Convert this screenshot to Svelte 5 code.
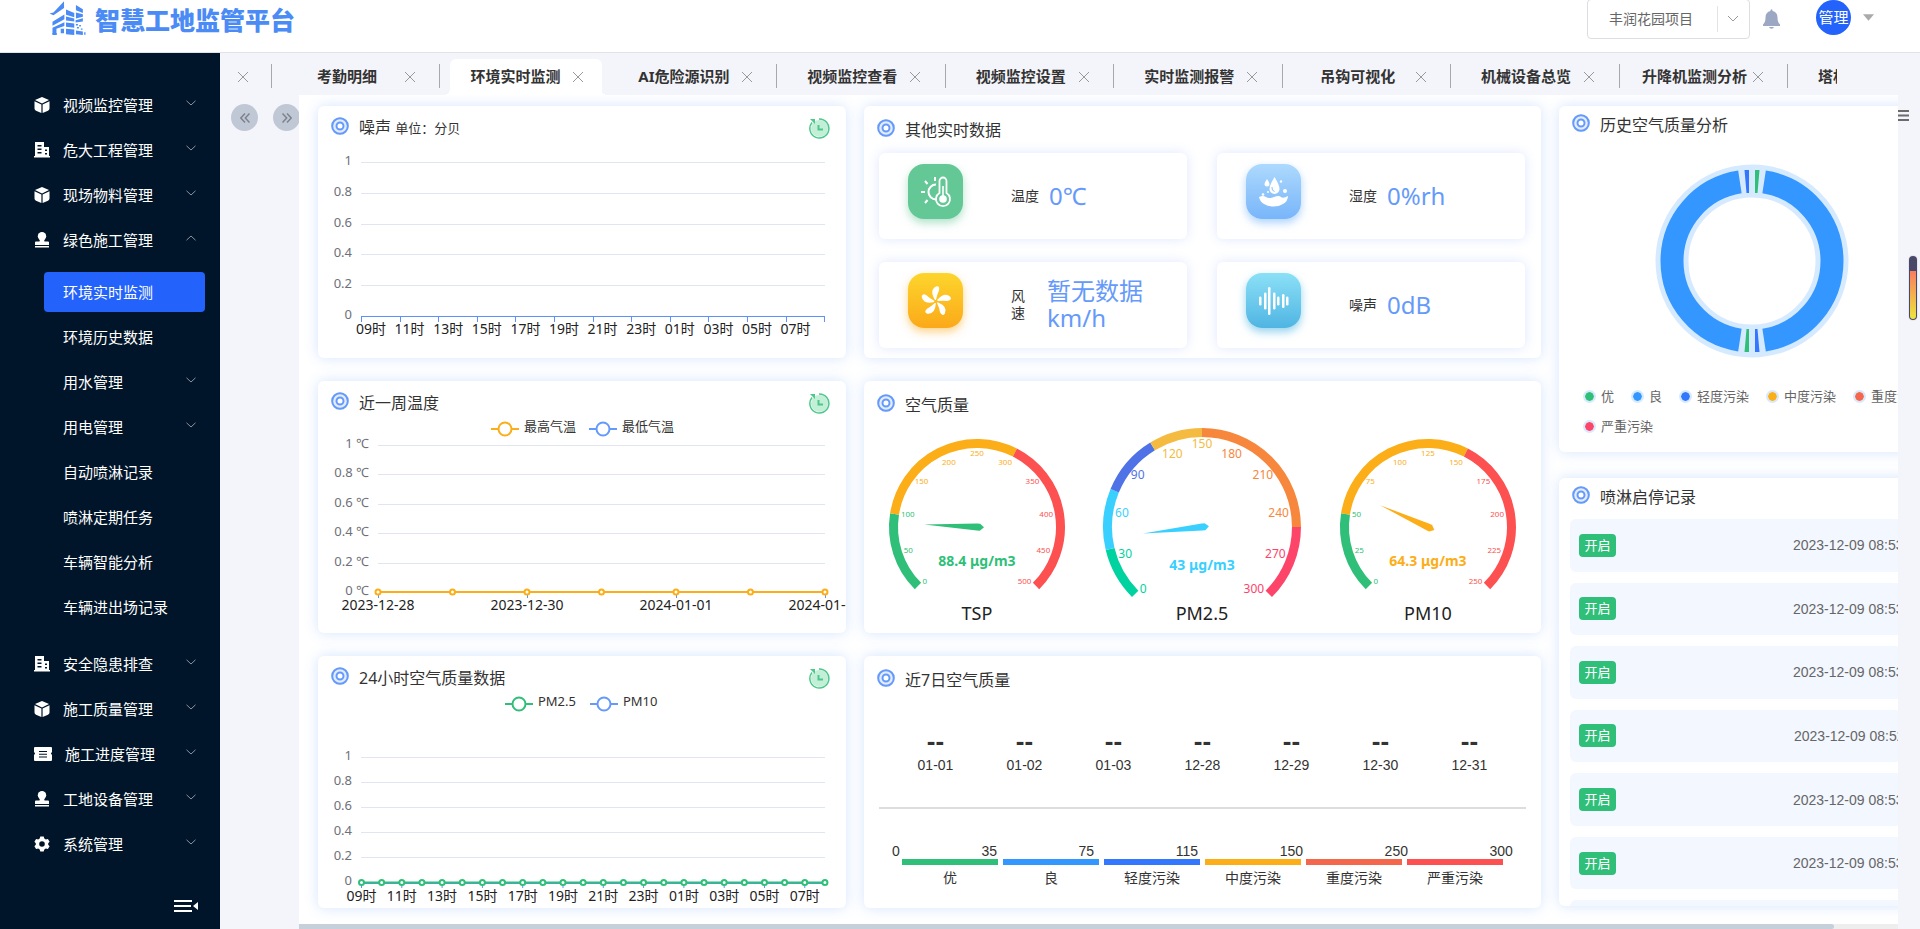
<script lang="ts">
  type MenuItem = { icon: string; label: string; open?: boolean };

  const menuTop: MenuItem[] = [
    { icon: 'box', label: '视频监控管理' },
    { icon: 'building', label: '危大工程管理' },
    { icon: 'box', label: '现场物料管理' },
    { icon: 'stamp', label: '绿色施工管理', open: true },
  ];
  const subMenu = [
    { label: '环境实时监测', active: true },
    { label: '环境历史数据' },
    { label: '用水管理', more: true },
    { label: '用电管理', more: true },
    { label: '自动喷淋记录' },
    { label: '喷淋定期任务' },
    { label: '车辆智能分析' },
    { label: '车辆进出场记录' },
  ];
  const menuBottom: MenuItem[] = [
    { icon: 'building', label: '安全隐患排查' },
    { icon: 'box', label: '施工质量管理' },
    { icon: 'ticket', label: '施工进度管理' },
    { icon: 'stamp', label: '工地设备管理' },
    { icon: 'gear', label: '系统管理' },
  ];

  const tabs = [
    '考勤明细',
    '环境实时监测',
    'AI危险源识别',
    '视频监控查看',
    '视频监控设置',
    '实时监测报警',
    '吊钩可视化',
    '机械设备总览',
    '升降机监测分析',
    '塔机监测分析',
  ];
  let activeTab = $state(1);

  const hours = ['09', '11', '13', '15', '17', '19', '21', '23', '01', '03', '05', '07'];
  const yTicks = ['1', '0.8', '0.6', '0.4', '0.2', '0'];

  const metrics = [
    { kind: 'temp', label: '温度', value: '0℃' },
    { kind: 'humid', label: '湿度', value: '0%rh' },
    { kind: 'wind', label: '风速', value: '暂无数据km/h' },
    { kind: 'noise', label: '噪声', value: '0dB' },
  ];

  const bars = [
    [14, 9],
    [19, 17],
    [23, 28],
    [28, 17],
    [32, 9],
    [37, 14],
    [41, 9],
  ];

  type Gauge = {
    name: string;
    cx: number;
    r: number;
    max: number;
    value: number;
    font: number;
    detail: number;
    color: string;
    stops: [number, string][];
  };
  const gauges: Gauge[] = [
    {
      name: 'TSP',
      cx: 113,
      r: 88,
      max: 500,
      value: 88.4,
      font: 8,
      detail: 34,
      color: '#2fbf78',
      stops: [[100, '#2fbf78'], [300, '#fcae18'], [500, '#fd5151']],
    },
    {
      name: 'PM2.5',
      cx: 338,
      r: 99,
      max: 300,
      value: 43,
      font: 12,
      detail: 38,
      color: '#39d0ff',
      stops: [
        [35, '#00d2a0'],
        [75, '#39d0ff'],
        [115, '#4f73e6'],
        [150, '#f4bb40'],
        [250, '#f6873c'],
        [300, '#fd4469'],
      ],
    },
    {
      name: 'PM10',
      cx: 564,
      r: 88,
      max: 250,
      value: 64.3,
      font: 8,
      detail: 34,
      color: '#fcae18',
      stops: [[50, '#2fbf78'], [150, '#fcae18'], [250, '#fd5151']],
    },
  ];
  const gaugeY = 146;

  // Dials sweep 270 degrees clockwise, from lower left to lower right.
  function angleOf(g: Gauge, v: number) {
    return ((225 - (v / g.max) * 270) * Math.PI) / 180;
  }
  function arc(cx: number, cy: number, r: number, a: number, b: number) {
    const large = Math.abs(a - b) > Math.PI ? 1 : 0;
    const x1 = cx + r * Math.cos(a);
    const y1 = cy - r * Math.sin(a);
    const x2 = cx + r * Math.cos(b);
    const y2 = cy - r * Math.sin(b);
    return `M${x1} ${y1}A${r} ${r} 0 ${large} 1 ${x2} ${y2}`;
  }
  function segments(g: Gauge) {
    return g.stops.map(([to, color], i) => {
      const from = i ? g.stops[i - 1][0] : 0;
      return { color, d: arc(g.cx, gaugeY, g.r - 4.5, angleOf(g, from), angleOf(g, to)) };
    });
  }
  function labels(g: Gauge) {
    return Array.from({ length: 11 }, (_, i) => {
      const v = (g.max / 10) * i;
      const a = angleOf(g, v);
      const ux = Math.cos(a);
      const uy = -Math.sin(a);
      const r = g.r - 11;
      return {
        text: v,
        x: g.cx + ux * r,
        y: gaugeY - 1 + uy * r + (uy < -0.8 ? g.font / 2 : uy > 0.8 ? -g.font / 2 : 0),
        anchor: ux < -0.4 ? 'start' : ux > 0.4 ? 'end' : 'middle',
        color: g.stops.find(([to]) => v <= to)?.[1],
      };
    });
  }

  const days = ['01-01', '01-02', '01-03', '12-28', '12-29', '12-30', '12-31'];
  const levels = [
    { label: '优', color: '#2fbf78', line: '#2fbf78' },
    { label: '良', color: '#3497ff', line: '#3497ff' },
    { label: '轻度污染', color: '#3477ff', line: '#3477ff' },
    { label: '中度污染', color: '#fcae18', line: '#fcae18' },
    { label: '重度污染', color: '#f5674c', line: '#f5674c' },
    { label: '严重污染', color: '#fd4469', line: '#fd5151' },
  ];
  const bounds = [0, 35, 75, 115, 150, 250, 300];

  const rad = (deg: number) => (deg * Math.PI) / 180;

  const sprays = [
    '2023-12-09 08:53:58',
    '2023-12-09 08:53:46',
    '2023-12-09 08:53:32',
    '2023-12-09 08:52:11',
    '2023-12-09 08:53:08',
    '2023-12-09 08:53:02',
    '2023-12-09 08:53:00',
  ];
</script>

{#snippet menuIcon(name: string)}
  <svg
    class="menu-icon"
    class:wide={name === 'ticket'}
    viewBox={name === 'ticket' ? '0 0 18 16' : '0 0 16 16'}
    fill="#fff"
    aria-hidden="true"
  >
    {#if name === 'box'}
      <path d="M8 0 15 3 8 6.400 1 3z" />
      <path d="M.500 4.200 7.400 7.400V16L2 13.700Q.500 13 .500 11.500zM15.500 4.200 8.600 7.400V16l5.400-2.300q1.500-.700 1.500-2.200z" />
    {:else if name === 'building'}
      <path fill-rule="evenodd" d="M1 0h9v5h5v9h1v1.500H0V14h1zM3.500 3v1.500h4V3zm0 3.500V8h4V6.500zm0 3.500v1.500h4V10zM11 7.500V9h2V7.500zm0 3.500v1.500h2V11z" />
    {:else if name === 'stamp'}
      <circle cx="8" cy="4.200" r="4.200" />
      <path d="M6 7h4l.500 2.500H14q1 0 1 1V13H1v-2.500q0-1 1-1h3.500zM1 14h14v1.500H1z" />
    {:else if name === 'ticket'}
      <path fill-rule="evenodd" d="M1 1h16q1 0 1 1v4.200q-1 .300-1 1.300t1 1.300V14q0 1-1 1H1q-1 0-1-1V8.800q1-.300 1-1.300T0 6.200V2q0-1 1-1zM5 5v1h8V5zm0 2.800v1h8v-1zm0 2.800v1h8v-1z" />
    {:else}
      <path fill-rule="evenodd" d="M6.300.500h3.400l.600 2 1.500.900 2.100-.500 1.700 2.900L14.200 7.200v1.600l1.400 1.400-1.700 2.900-2.100-.500-1.500.900-.600 2H6.300l-.600-2-1.500-.900-2.100.500-1.700-2.900 1.400-1.400V7.200L.400 5.800l1.700-2.900 2.100.500 1.500-.900zM8 5.200a2.800 2.800 0 1 0 0 5.600 2.800 2.800 0 0 0 0-5.600z" />
    {/if}
  </svg>
{/snippet}

{#snippet chevron(up: boolean)}
  <svg class="chevron" viewBox="0 0 10 6" fill="none" stroke="#8b939d" aria-hidden="true">
    <path d={up ? 'M.500 5.200 5 1l4.500 4.200' : 'M.500.800 5 5 9.500.800'} />
  </svg>
{/snippet}

{#snippet menuRow(item: MenuItem)}
  <li>
    <button class="menu-row" aria-expanded={!!item.open}>
      {@render menuIcon(item.icon)}
      <span>{item.label}</span>
      {@render chevron(!!item.open)}
    </button>
  </li>
{/snippet}

{#snippet target()}
  <svg class="target" viewBox="0 0 18 18" fill="none" stroke="#659afb" aria-hidden="true">
    <circle cx="9" cy="9" r="9" fill="#e4edff" stroke="none" />
    <circle cx="9" cy="9" r="7.800" stroke-width="2" />
    <circle cx="9" cy="9" r="3.500" stroke-width="2" fill="#fff" />
  </svg>
{/snippet}

{#snippet refresh(label: string)}
  <button class="refresh" aria-label={label}>
    <svg viewBox="0 0 22 22" fill="none" stroke="#4cc88a" aria-hidden="true">
      <circle cx="11.500" cy="11.500" r="8.500" fill="#c3eed8" stroke="none" />
      <path d="M11 2A9.500 9.500 0 1 1 4 5.500" stroke-width="1.500" />
      <path d="M2 2 7 2 7 7z" fill="#4cc88a" stroke="none" />
      <path d="M10.500 8V12.500h4.500" stroke-width="2" />
    </svg>
  </button>
{/snippet}

{#snippet legendMark(x: number, color: string, label: string)}
  <path d="M{x} 48h28" stroke={color} stroke-width="2" />
  <circle cx={x + 14} cy="48" r="6.500" fill="#fff" stroke={color} stroke-width="2" />
  <text class="key" x={x + 33} y="45">{label}</text>
{/snippet}

<div class="app">
  <header>
    <div class="brand">
      <svg viewBox="147 3 114 106" fill="#4a8bf5" aria-hidden="true">
        <path d="M148 41 160 38 192 4v20l-32 22z" />
        <path d="M157 66 193 44v14l-36 20zM157 84l36-17v12l-24 8v17h-12z" />
        <path d="M198 29 223 39v13l-25-7zM228 15l21 13v11l-21-8zM228 38l21 5v8l-21 5zM198 50l25 6v9l-25-3zM227 61l22-6v10l-22 3z" />
        <path d="M198 68l25 3v13l-25-3zM198 87l25 2v17l-25-2zM228 92l21 3v11l-21-2zM157 100h13v6h-13z" />
        <path d="M228 73h6v4h-6zM238 76h5v4h-5zM231 82h6v4h-6zM243 86h5v4h-5zM253 98h4v7h-4zM182 87h10v14h-10z" />
      </svg>
      <h1>智慧工地监管平台</h1>
    </div>
    <div class="tools">
      <div class="project">
        <select aria-label="项目">
          <option>丰润花园项目</option>
        </select>
        <svg viewBox="0 0 12 8" fill="none" stroke="#999" aria-hidden="true"><path d="m1 1 5 5 5-5" /></svg>
      </div>
      <button class="bell" aria-label="消息">
        <svg viewBox="0 0 17 20" fill="#9ba7c3" aria-hidden="true">
          <path d="M7.500 2V1q1-1.500 2 0v1q5 1 5 6.500 0 5 2.500 7v1.500H0v-1.500q2.500-2 2.500-7Q2.500 3 7.500 2zM6 18h5q-.500 1.800-2.500 1.800T6 18z" />
        </svg>
      </button>
      <button class="user">
        <span class="avatar">管理</span>
        <svg viewBox="0 0 12 7" fill="#aaa" aria-hidden="true"><path d="M0 0h12L6 7z" /></svg>
      </button>
    </div>
  </header>

  <div class="body">
    <nav class="sidebar">
      <ul>
        {#each menuTop as item}
          {@render menuRow(item)}
        {/each}
      </ul>
      <ul class="sub">
        {#each subMenu as item}
          <li>
            <a href="#env" class:active={item.active}>
              <span>{item.label}</span>
              {#if item.more}{@render chevron(false)}{/if}
            </a>
          </li>
        {/each}
      </ul>
      <ul>
        {#each menuBottom as item}
          {@render menuRow(item)}
        {/each}
      </ul>
      <button class="collapse" aria-label="收起菜单">
        <svg viewBox="0 0 24 12" fill="#fff" aria-hidden="true">
          <path d="M0 0h18v2H0zM0 5h17v2H0zM0 10h18v2H0zM24 2v8l-5-4z" />
        </svg>
      </button>
    </nav>

    <main>
      <div class="tabs">
        <div class="tab stub">
          <button class="close" aria-label="关闭">
            <svg viewBox="0 0 10 10" aria-hidden="true"><path d="m0 0 10 10M10 0 0 10" /></svg>
          </button>
        </div>
        {#each tabs as tab, i}
          <div class="tab" class:active={i === activeTab} class:bare={i === activeTab + 1}>
            <button class="tab-label" onclick={() => (activeTab = i)}>{tab}</button>
            <button class="close" aria-label="关闭{tab}">
              <svg viewBox="0 0 10 10" aria-hidden="true"><path d="m0 0 10 10M10 0 0 10" /></svg>
            </button>
          </div>
        {/each}
      </div>

      <div class="stage">
        <div class="gutter">
          <button aria-label="向左">
            <svg viewBox="0 0 10 10" aria-hidden="true"><path d="M5 .500.800 5 5 9.500M9.500.500 5.300 5l4.200 4.500" /></svg>
          </button>
          <button aria-label="向右">
            <svg viewBox="0 0 10 10" aria-hidden="true"><path d="M.500.500 4.700 5 .500 9.500M5 .500 9.200 5 5 9.500" /></svg>
          </button>
        </div>

        <div class="viewport">
          <div class="board">
            <div class="col">
              <section class="card">
                <div class="head">
                  {@render target()}
                  <h2>噪声 <small>单位：分贝</small></h2>
                  {@render refresh('刷新噪声')}
                </div>
                <svg class="chart" viewBox="0 40 528 212" role="img" aria-label="噪声">
                  {#each yTicks as t, i}
                    {#if i < 5}<path class="grid" d="M43 {Math.round(56 + i * 30.8) + 0.5}H507" />{/if}
                    <text class="axis-y" x="34" y={54 + i * 30.8}>{t}</text>
                  {/each}
                  <path class="axis" d="M43 210.500H507" />
                  {#each Array(13) as _, i}
                    <path class="axis" d="M{Math.round(43 + i * 38.6) + 0.5} 210v6" />
                  {/each}
                  {#each hours as h, i}
                    <text class="axis-x" x={53 + i * 38.6} y="223">{h}时</text>
                  {/each}
                </svg>
              </section>

              <section class="card">
                <div class="head">
                  {@render target()}
                  <h2>近一周温度</h2>
                  {@render refresh('刷新温度')}
                </div>
                <svg class="chart" viewBox="0 40 528 212" role="img" aria-label="近一周温度">
                  {@render legendMark(173, '#fcae18', '最高气温')}
                  {@render legendMark(271, '#659afb', '最低气温')}
                  {#each yTicks as t, i}
                    {#if i < 5}<path class="grid" d="M60 {Math.round(64 + i * 29.4) + 0.5}H507" />{/if}
                    <text class="axis-y" x="51" y={62 + i * 29.4}>{t} ℃</text>
                  {/each}
                  <path d="M60 211H507" stroke="#fcae18" stroke-width="2" />
                  {#each Array(7) as _, i}
                    {#if i % 2 === 0}<path class="axis" d="M{60.5 + i * 74.5} 211v6" />{/if}
                    <circle cx={60 + i * 74.5} cy="211" r="2.500" fill="#fff" stroke="#fcae18" stroke-width="2" />
                  {/each}
                  {#each ['2023-12-28', '2023-12-30', '2024-01-01', '2024-01-03'] as d, i}
                    <text class="axis-x" x={60 + i * 149} y="224">{d}</text>
                  {/each}
                </svg>
              </section>

              <section class="card">
                <div class="head">
                  {@render target()}
                  <h2>24小时空气质量数据</h2>
                  {@render refresh('刷新空气质量')}
                </div>
                <svg class="chart" viewBox="0 40 528 212" role="img" aria-label="24小时空气质量数据">
                  {@render legendMark(187, '#2fbf78', 'PM2.5')}
                  {@render legendMark(272, '#659afb', 'PM10')}
                  {#each yTicks as t, i}
                    {#if i < 5}<path class="grid" d="M43 {Math.round(101 + i * 25.1) + 0.5}H507" />{/if}
                    <text class="axis-y" x="34" y={99 + i * 25.1}>{t}</text>
                  {/each}
                  <path class="axis" d="M43 227.500H507" />
                  <path d="M43 226.500H507" stroke="#2fbf78" stroke-width="2" />
                  {#each Array(24) as _, i}
                    {#if i % 2 === 0}<path class="axis" d="M{43.5 + i * 20.15} 227v5" />{/if}
                    <circle cx={43.5 + i * 20.15} cy="226.500" r="2.500" fill="#fff" stroke="#2fbf78" stroke-width="2" />
                  {/each}
                  {#each hours as h, i}
                    <text class="axis-x" x={43.5 + i * 40.3} y="240">{h}时</text>
                  {/each}
                </svg>
              </section>
            </div>

            <div class="col middle">
              <section class="card">
                <div class="head">
                  {@render target()}
                  <h2>其他实时数据</h2>
                </div>
                <div class="metrics">
                  {#each metrics as m}
                    <div class="metric">
                      <svg class="tile {m.kind}" viewBox="0 0 55 55" fill="#fff" aria-hidden="true">
                        {#if m.kind === 'temp'}
                          <path d="M28 20.500a7.500 7.500 0 1 0 0 15" fill="none" stroke="#fff" stroke-width="2" />
                          <path d="M27 13v4M17 17l2.500 3M13 28h4M17 39l2.500-3" stroke="#fff" stroke-width="2" />
                          <path d="M31.500 29V17a3.500 3.500 0 0 1 7 0v12a7 7 0 1 1-7 0z" fill="#64c896" stroke="#fff" stroke-width="1.800" />
                          <circle cx="35" cy="35" r="3.800" />
                          <path d="M34.200 22h1.600v11h-1.600z" />
                        {:else if m.kind === 'humid'}
                          <path d="M28.500 13q5 8 5 12a5 5 0 0 1-10 0q0-4 5-12zM21 15q2.500 3.500 2.500 5a2.500 2.500 0 0 1-5 0q0-1.500 2.500-5z" />
                          <circle cx="35" cy="17.500" r="1.200" />
                          <circle cx="39" cy="27" r="2" />
                          <circle cx="17" cy="30.500" r="1.300" />
                          <circle cx="22" cy="28" r="1" />
                          <path d="M13 33q4-2 7 0t8 0 7 0 7-1q0 5-5 8-4 2.500-9.500 2.500T18 40q-4-2-5-7z" />
                          <path d="M26 23q-.500 4 2.500 4.500" fill="none" stroke="#8cc3fb" />
                        {:else if m.kind === 'wind'}
                          {#each [0, 72, 144, 216, 288] as turn}
                            <path d="M27 27Q21 17 28 13.500q4-1 3 4-2 4-3 9.500z" transform="rotate({turn} 28 28.500)" />
                          {/each}
                          <circle cx="28" cy="28.500" r="1.500" fill="#fbbd20" />
                        {:else}
                          {#each bars as [x, h]}
                            <rect x={x - 1} y={28 - h / 2} width="2.500" height={h} rx="1.200" />
                          {/each}
                        {/if}
                      </svg>
                      <span class="metric-label" class:narrow={m.kind === 'wind'}>{m.label}</span>
                      <strong>{m.value}</strong>
                    </div>
                  {/each}
                </div>
              </section>

              <section class="card">
                <div class="head">
                  {@render target()}
                  <h2>空气质量</h2>
                </div>
                <svg class="chart" viewBox="0 44 677 208" role="img" aria-label="空气质量">
                  {#each gauges as g}
                    {#each segments(g) as s}
                      <path d={s.d} fill="none" stroke={s.color} stroke-width="9" />
                    {/each}
                    {#each labels(g) as l}
                      <text x={l.x} y={l.y} fill={l.color} font-size={g.font} text-anchor={l.anchor}>{l.text}</text>
                    {/each}
                    <path
                      d="M{-g.r * 0.6} 0 0-3.500 3-3.500 7 0 3 3.500 0 3.500z"
                      fill={g.color}
                      transform="translate({g.cx} {gaugeY}) rotate({45 + (g.value / g.max) * 270 - 90})"
                    />
                    <text class="reading" x={g.cx} y={gaugeY + g.detail} fill={g.color}>{g.value} μg/m3</text>
                    <text class="gauge-name" x={g.cx} y={gaugeY + 86}>{g.name}</text>
                  {/each}
                </svg>
              </section>

              <section class="card">
                <div class="head">
                  {@render target()}
                  <h2>近7日空气质量</h2>
                </div>
                <dl class="days">
                  {#each days as d}
                    <div>
                      <dd>--</dd>
                      <dt>{d}</dt>
                    </div>
                  {/each}
                </dl>
                <hr />
                <div class="bounds">
                  {#each bounds as b}<span>{b}</span>{/each}
                </div>
                <div class="levels">
                  {#each levels as l}
                    <span class="level"><i style:background={l.line}></i>{l.label}</span>
                  {/each}
                </div>
              </section>
            </div>

            <div class="col right">
              <section class="card">
                <div class="head">
                  {@render target()}
                  <h2>历史空气质量分析</h2>
                </div>
                <svg class="chart" viewBox="0 34 386 246" role="img" aria-label="历史空气质量分析">
                  <circle cx="193" cy="155" r="80" fill="none" stroke="#d6eaff" stroke-width="33" />
                  <path d={arc(193, 155, 80, rad(81.3), rad(-81.3))} fill="none" stroke="#3497ff" stroke-width="23" />
                  <path d={arc(193, 155, 80, rad(261.3), rad(98.7))} fill="none" stroke="#3497ff" stroke-width="23" />
                  <g transform="translate(193 155)">
                    <path d="M3-68V-91h4.500L5.500-68zM-3 68V91h-4.500l2-23z" fill="#2fbf78" />
                    <path d="M-3-68V-91h-4.500l2 23zM3 68V91h4.500l-2-23z" fill="#3477ff" />
                  </g>
                </svg>
                <ul class="legend">
                  {#each levels as l}
                    <li><i style:background-color={l.color}></i>{l.label}</li>
                  {/each}
                </ul>
              </section>

              <section class="card spray">
                <div class="head">
                  {@render target()}
                  <h2>喷淋启停记录</h2>
                </div>
                <ul class="records">
                  {#each sprays as s}
                    <li><span class="tag">开启</span><time>{s}</time></li>
                  {/each}
                </ul>
              </section>
            </div>
          </div>
          <div class="scrollbar"><span></span></div>
        </div>

        <div class="edge">
          <button aria-label="菜单">
            <svg viewBox="0 0 11 11" fill="#6b6b6b" aria-hidden="true"><path d="M0 0h11v2H0zM0 4.500h11v2H0zM0 9h11v2H0z" /></svg>
          </button>
        </div>
      </div>
    </main>
  </div>

  <div class="meter"><span></span></div>
</div>

<style>
  :global(body) {
    background: #f4f5fa;
  }
  .app {
    min-height: 100vh;
    display: flex;
    flex-direction: column;
    overflow: hidden;
    color: #333;
    font-family: 'Noto Sans', 'Noto Sans CJK SC', sans-serif;
    font-size: 14px;
  }
  button {
    padding: 0;
    border: 0;
    background: none;
    color: inherit;
    font: inherit;
    cursor: pointer;
  }
  svg {
    display: block;
    flex: none;
  }
  ul,
  dl,
  dd,
  h1,
  h2 {
    margin: 0;
    padding: 0;
    list-style: none;
  }

  header {
    display: flex;
    justify-content: space-between;
    height: 52px;
    background: #fff;
    border-bottom: 1px solid #e2e3e6;
  }
  .brand {
    display: flex;
    gap: 8px;
    padding: 1px 0 0 49px;
  }
  .brand svg {
    width: 38px;
    height: 35px;
  }
  h1 {
    color: #4a8bf5;
    font-size: 25px;
    line-height: 38px;
    font-weight: 900;
  }
  .tools {
    display: flex;
    align-items: flex-start;
    padding-right: 46px;
  }
  .project {
    display: flex;
    align-items: center;
    box-sizing: border-box;
    width: 163px;
    height: 40px;
    margin-top: -1px;
    padding-right: 10px;
    border: 1px solid #dcdee3;
    border-radius: 4px;
  }
  select {
    flex: 1;
    height: 26px;
    margin-right: 9px;
    padding: 0 0 2px 21px;
    appearance: none;
    border: 0;
    border-right: 1px solid #e2e4e8;
    background: none;
    color: #666;
    font: inherit;
  }
  .project svg {
    width: 12px;
    height: 8px;
  }
  .bell {
    margin: 9px 36px 0 13px;
  }
  .bell svg {
    width: 17px;
    height: 20px;
  }
  .user {
    display: flex;
    align-items: center;
    gap: 12px;
  }
  .avatar {
    width: 35px;
    height: 35px;
    border-radius: 50%;
    background: #2362fb;
    color: #fff;
    font-size: 15px;
    line-height: 34px;
    text-align: center;
  }
  .user svg {
    width: 11px;
    height: 7px;
  }

  .body {
    flex: 1;
    display: flex;
  }
  .sidebar {
    flex: none;
    box-sizing: border-box;
    width: 220px;
    padding-top: 29px;
    background: #001529;
    color: #fff;
    font-size: 15px;
  }
  .menu-row {
    display: flex;
    align-items: center;
    width: 100%;
    height: 45px;
    padding: 0 24px 0 34px;
    text-align: left;
  }
  .menu-row span {
    flex: 1;
    margin-left: 13px;
  }
  .menu-icon {
    width: 16px;
    height: 16px;
  }
  .menu-icon.wide {
    width: 18px;
  }
  .chevron {
    width: 10px;
    height: 6px;
    margin-bottom: 3px;
  }
  .sub {
    display: grid;
    gap: 5px;
    padding: 10px 15px 14px 44px;
  }
  .sub a {
    display: flex;
    align-items: center;
    justify-content: space-between;
    box-sizing: border-box;
    height: 40px;
    padding: 0 9px 2px 19px;
    border-radius: 4px;
    color: #fff;
    text-decoration: none;
  }
  .sub a.active {
    background: #2362fb;
  }
  .collapse {
    display: block;
    margin: 34px 0 10px 174px;
  }
  .collapse svg {
    width: 24px;
    height: 12px;
  }

  main {
    flex: 1;
    min-width: 0;
    display: flex;
    flex-direction: column;
    background: #f4f5fa;
  }
  .tabs {
    display: grid;
    grid-template-columns: 51px repeat(9, minmax(0, 1fr)) 50px;
    height: 42px;
    margin-right: 83px;
    overflow: hidden;
  }
  .tab {
    position: relative;
    z-index: 0;
    display: flex;
    align-items: center;
    gap: 4px;
    height: 36px;
    margin-top: 6px;
    padding-left: 22px;
    overflow: hidden;
  }
  .tab::before {
    content: '';
    position: absolute;
    left: 0;
    top: 5px;
    width: 1px;
    height: 24px;
    background: #a6a8ac;
  }
  .tab.bare::before,
  .tab.stub::before {
    display: none;
  }
  .tab.active {
    /* white sheet with small feet curving out into the board below */
    background:
      radial-gradient(circle at 0 0, transparent 6px, #fff 6px) 5px 100% / 6px 6px no-repeat,
      radial-gradient(circle at 100% 0, transparent 6px, #fff 6px) 162px 100% / 6px 6px no-repeat;
  }
  .tab.active::after {
    content: '';
    position: absolute;
    z-index: -1;
    inset: 0 6px 0 11px;
    border-radius: 6px 6px 0 0;
    background: #fff;
  }
  .tab.stub {
    padding-left: 18px;
  }
  .tab-label {
    flex: none;
    width: 108px;
    height: 32px;
    padding-bottom: 4px;
    font-size: 15px;
    font-weight: 700;
    white-space: nowrap;
  }
  .close svg {
    width: 10px;
    height: 10px;
    stroke: #999;
  }

  .stage {
    flex: 1;
    display: flex;
    min-height: 0;
  }
  .gutter {
    flex: none;
    box-sizing: border-box;
    width: 79px;
    display: flex;
    align-items: flex-start;
    gap: 15px;
    padding: 9px 0 0 11px;
    overflow: hidden;
  }
  .gutter button {
    flex: none;
    display: grid;
    place-items: center;
    width: 27px;
    height: 27px;
    border-radius: 50%;
    background: #c0c8d6;
  }
  .gutter svg {
    width: 10px;
    height: 10px;
    fill: none;
    stroke: #7c828e;
    stroke-width: 1.5;
  }
  .viewport {
    flex: 1;
    min-width: 0;
    display: flex;
    flex-direction: column;
    overflow: hidden;
    background: #fff;
  }
  .board {
    flex: 1;
    box-sizing: border-box;
    width: 104%;
    display: grid;
    grid-template-columns: 528fr 677fr 386fr;
    gap: 18px;
    align-items: start;
    padding: 11px 17px 15px 19px;
  }
  .scrollbar {
    height: 5px;
    background: #eee;
  }
  .scrollbar span {
    display: block;
    width: 96%;
    height: 5px;
    border-radius: 0 3px 3px 0;
    background: #c5d0db;
  }
  .edge {
    flex: none;
    width: 22px;
    padding-top: 15px;
  }
  .edge button {
    display: block;
  }
  .edge svg {
    width: 11px;
    height: 11px;
  }

  .col {
    display: grid;
    gap: 23px;
    min-width: 0;
  }
  .col.right {
    gap: 26px;
  }
  .card {
    min-width: 0;
    border-radius: 6px;
    background: #fff;
    box-shadow: 0 0 14px rgba(80, 145, 250, 0.24);
    overflow: hidden;
  }
  .col:not(.right) .card {
    min-height: 252px;
  }
  .head {
    display: flex;
    align-items: center;
    height: 40px;
    padding: 0 16px 0 13px;
  }
  .middle .head {
    height: 44px;
  }
  .right .head {
    height: 34px;
  }
  .target {
    width: 18px;
    height: 18px;
  }
  h2 {
    flex: 1;
    margin-left: 10px;
    padding-top: 3px;
    font-size: 16px;
    line-height: 20px;
    font-weight: 400;
  }
  small {
    font-size: 13px;
  }
  .refresh {
    padding-top: 3px;
  }
  .refresh svg {
    width: 22px;
    height: 22px;
  }
  .chart {
    width: 100%;
    height: auto;
    overflow: visible;
  }
  .chart text {
    dominant-baseline: central;
  }
  .grid {
    stroke: #e0e6f1;
  }
  .axis {
    stroke: #5b8ff9;
  }
  .chart .axis-y {
    fill: #6e7079;
    font-size: 13px;
    text-anchor: end;
  }
  .chart .axis-x {
    fill: #222;
    font-size: 14px;
    text-anchor: middle;
  }
  .chart .key {
    fill: #333;
    font-size: 13px;
  }
  .chart .reading {
    font-size: 14px;
    font-weight: 700;
    text-anchor: middle;
  }
  .chart .gauge-name {
    fill: #222;
    font-size: 18px;
    text-anchor: middle;
  }

  .metrics {
    display: grid;
    grid-template-columns: 1fr 1fr;
    gap: 23px 30px;
    padding: 3px 16px 10px 15px;
  }
  .metric {
    display: flex;
    align-items: center;
    height: 86px;
    border-radius: 6px;
    box-shadow: 0 0 12px rgba(80, 120, 250, 0.18);
  }
  .tile {
    align-self: flex-start;
    width: 55px;
    height: 55px;
    margin: 11px 48px 0 29px;
    border-radius: 16px;
  }
  .temp {
    background: #64c896;
    box-shadow: 0 4px 8px rgba(100, 200, 150, 0.5);
  }
  .humid {
    background: linear-gradient(#add9fd, #78b5fa);
    box-shadow: 0 4px 8px rgba(120, 181, 250, 0.6);
  }
  .wind {
    background: linear-gradient(#fdd52c, #fba919);
    box-shadow: 0 4px 8px rgba(251, 169, 25, 0.5);
  }
  .noise {
    background: linear-gradient(#8be0f6, #50b5e3);
    box-shadow: 0 4px 8px rgba(80, 181, 227, 0.6);
  }
  .metric-label {
    width: 28px;
    margin-right: 10px;
    padding-bottom: 2px;
    line-height: 17px;
  }
  .metric-label.narrow {
    width: 14px;
    margin-right: 22px;
  }
  strong {
    width: 110px;
    padding-bottom: 2px;
    color: #659afb;
    font-size: 24px;
    line-height: 27px;
    font-weight: 400;
  }

  .days {
    display: grid;
    grid-template-columns: repeat(7, 1fr);
    margin: 29px 27px 32px;
    text-align: center;
    font-family: 'Liberation Sans', sans-serif;
  }
  .days div {
    display: flex;
    flex-direction: column;
    gap: 2px;
  }
  dd {
    font-size: 26px;
    line-height: 24px;
    font-weight: 700;
  }
  dt {
    line-height: 20px;
  }
  hr {
    height: 2px;
    margin: 0 15px;
    border: 0;
    background: #ddd;
  }
  .bounds {
    display: flex;
    justify-content: space-between;
    margin: 34px 28px 0;
    font-family: 'Liberation Sans', sans-serif;
    line-height: 16px;
  }
  .levels {
    display: grid;
    grid-template-columns: repeat(6, 1fr);
    gap: 5px;
    margin: 0 38px;
    text-align: center;
    line-height: 20px;
  }
  .level i {
    display: block;
    height: 6px;
    margin-bottom: 3px;
  }

  .legend {
    display: flex;
    flex-wrap: wrap;
    gap: 10px 17px;
    padding: 0 12px 16px 24px;
    color: #666;
    font-size: 13px;
    line-height: 20px;
  }
  .legend li {
    display: flex;
    align-items: center;
    gap: 5px;
  }
  .legend i {
    width: 9px;
    height: 9px;
    border: 2px solid #d6eaff;
    border-radius: 50%;
    background-clip: padding-box;
  }

  .spray {
    height: 428px;
  }
  .records {
    display: grid;
    grid-template-rows: repeat(7, 1fr);
    gap: 11px;
    height: 434px;
    margin: 7px 10px 0 11px;
  }
  .records li {
    display: flex;
    align-items: center;
    justify-content: space-between;
    padding: 0 12px 0 9px;
    border-radius: 6px;
    background: #f3f7ff;
  }
  .tag {
    width: 37px;
    border-radius: 4px;
    background: #2fbf78;
    color: #fff;
    font-size: 13px;
    line-height: 23px;
    text-align: center;
  }
  time {
    color: #666;
    font-family: 'Liberation Sans', sans-serif;
  }

  .meter {
    position: fixed;
    top: 256px;
    right: 3px;
    box-sizing: border-box;
    width: 8px;
    height: 64px;
    padding: 15px 1px 1px;
    border-radius: 4px;
    background: #4a4868;
    box-shadow: 0 0 0 1px #e6e6f0;
  }
  .meter span {
    display: block;
    height: 100%;
    border-radius: 0 0 4px 4px;
    background: linear-gradient(#f97d5f, #ece53e);
  }
</style>
